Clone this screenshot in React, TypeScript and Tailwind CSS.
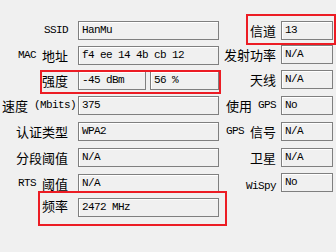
import type { ReactNode } from "react";

const mono = "font-['Liberation_Mono',monospace] text-[11px] tracking-[-0.6px]";
const cjk = "font-['Noto_Sans_CJK_SC','Noto_Sans',sans-serif] text-[13px]";

// sunken read-only field, like the old win32 edit boxes
const Field = ({ value, className }: { value: string; className: string }) => (
  <div
    className={`h-[19px] flex items-center pl-[3px] bg-[#f0f0f0] border border-[#7f7f7f] shadow-[inset_1px_1px_0_#ffffff] text-black whitespace-pre ${mono} ${className}`}
  >
    {value}
  </div>
);

const L = ({ children }: { children: ReactNode }) => <span className={`${mono} whitespace-pre`}>{children}</span>;
const C = ({ children }: { children: ReactNode }) => <span className={cjk}>{children}</span>;

const lbl = "flex items-center justify-end whitespace-nowrap";

const App = () => {
  return (
    <div className="relative w-[336px] h-[252px] overflow-hidden bg-[#f0f0f0] text-black leading-none">
      <div className="flex">
        {/* Left column */}
        <div className="flex flex-col pt-[21px] w-[220px]">
          <div className="flex items-center h-[19px]">
            <div className={`w-[68px] ${lbl}`}><L>SSID</L></div>
            <Field value="HanMu" className="ml-[10px] w-[141px]" />
          </div>
          <div className="flex items-center h-[19px] mt-[6px]">
            <div className={`w-[68px] ${lbl}`}><L>MAC </L><C>地址</C></div>
            <Field value="f4 ee 14 4b cb 12" className="ml-[10px] w-[141px]" />
          </div>
          <div className="flex items-center h-[19px] mt-[6px]">
            <div className={`w-[68px] ${lbl}`}><C>强度</C></div>
            <Field value="-45 dBm" className="ml-[10px] w-[68px]" />
            <Field value="56 %" className="ml-[4px] w-[69px]" />
          </div>
          <div className="flex items-center h-[19px] mt-[6px]">
            <div className={`w-[76px] ${lbl}`}><C>速度</C><L> (Mbits)</L></div>
            <Field value="375" className="ml-[2px] w-[141px]" />
          </div>
          <div className="flex items-center h-[19px] mt-[7px]">
            <div className={`w-[68px] ${lbl}`}><C>认证类型</C></div>
            <Field value="WPA2" className="ml-[10px] w-[141px]" />
          </div>
          <div className="flex items-center h-[19px] mt-[7px]">
            <div className={`w-[68px] ${lbl}`}><C>分段阈值</C></div>
            <Field value="N/A" className="ml-[10px] w-[141px]" />
          </div>
          <div className="flex items-center h-[19px] mt-[7px]">
            <div className={`w-[68px] ${lbl}`}><L>RTS </L><C>阈值</C></div>
            <Field value="N/A" className="ml-[10px] w-[141px]" />
          </div>
          <div className="flex items-start h-[19px] mt-[5px]">
            <div className="w-[68px] text-right -mt-[1px]"><C>频率</C></div>
            <Field value="2472 MHz" className="ml-[10px] w-[141px]" />
          </div>
        </div>

        {/* Right column */}
        <div className="flex flex-col pt-[21px]">
          <div className="flex items-center h-[19px]">
            <div className={`w-[56px] ${lbl}`}><C>信道</C></div>
            <Field value="13" className="ml-[5px] w-[52px]" />
          </div>
          <div className="flex items-center h-[19px] mt-[5px]">
            <div className={`w-[56px] ${lbl}`}><C>发射功率</C></div>
            <Field value="N/A" className="ml-[5px] w-[52px]" />
          </div>
          <div className="flex items-center h-[19px] mt-[6px]">
            <div className={`w-[56px] ${lbl}`}><C>天线</C></div>
            <Field value="N/A" className="ml-[5px] w-[52px]" />
          </div>
          <div className="flex items-center h-[19px] mt-[7px]">
            <div className={`w-[56px] ${lbl}`}><C>使用</C><L> GPS</L></div>
            <Field value="No" className="ml-[5px] w-[52px]" />
          </div>
          <div className="flex items-center h-[19px] mt-[7px]">
            <div className={`w-[56px] ${lbl}`}><L>GPS </L><C>信号</C></div>
            <Field value="N/A" className="ml-[5px] w-[52px]" />
          </div>
          <div className="flex items-center h-[19px] mt-[7px]">
            <div className={`w-[56px] ${lbl}`}><C>卫星</C></div>
            <Field value="N/A" className="ml-[5px] w-[52px]" />
          </div>
          <div className="flex items-start h-[19px] mt-[6px]">
            <div className="w-[56px] text-right pt-[2px]"><L>WiSpy</L></div>
            <Field value="No" className="ml-[5px] w-[52px]" />
          </div>
        </div>
      </div>

      {/* red highlight frames drawn over the form */}
      <div className="absolute left-[40px] top-[70px] w-[181px] h-[24px] border-2 border-[#ec1c24]" />
      <div className="absolute left-[246px] top-[14px] w-[90px] h-[31px] border-2 border-[#ec1c24]" />
      <div className="absolute left-[38px] top-[191px] w-[189px] h-[35px] border-2 border-[#ec1c24]" />
    </div>
  );
};

export default App;
